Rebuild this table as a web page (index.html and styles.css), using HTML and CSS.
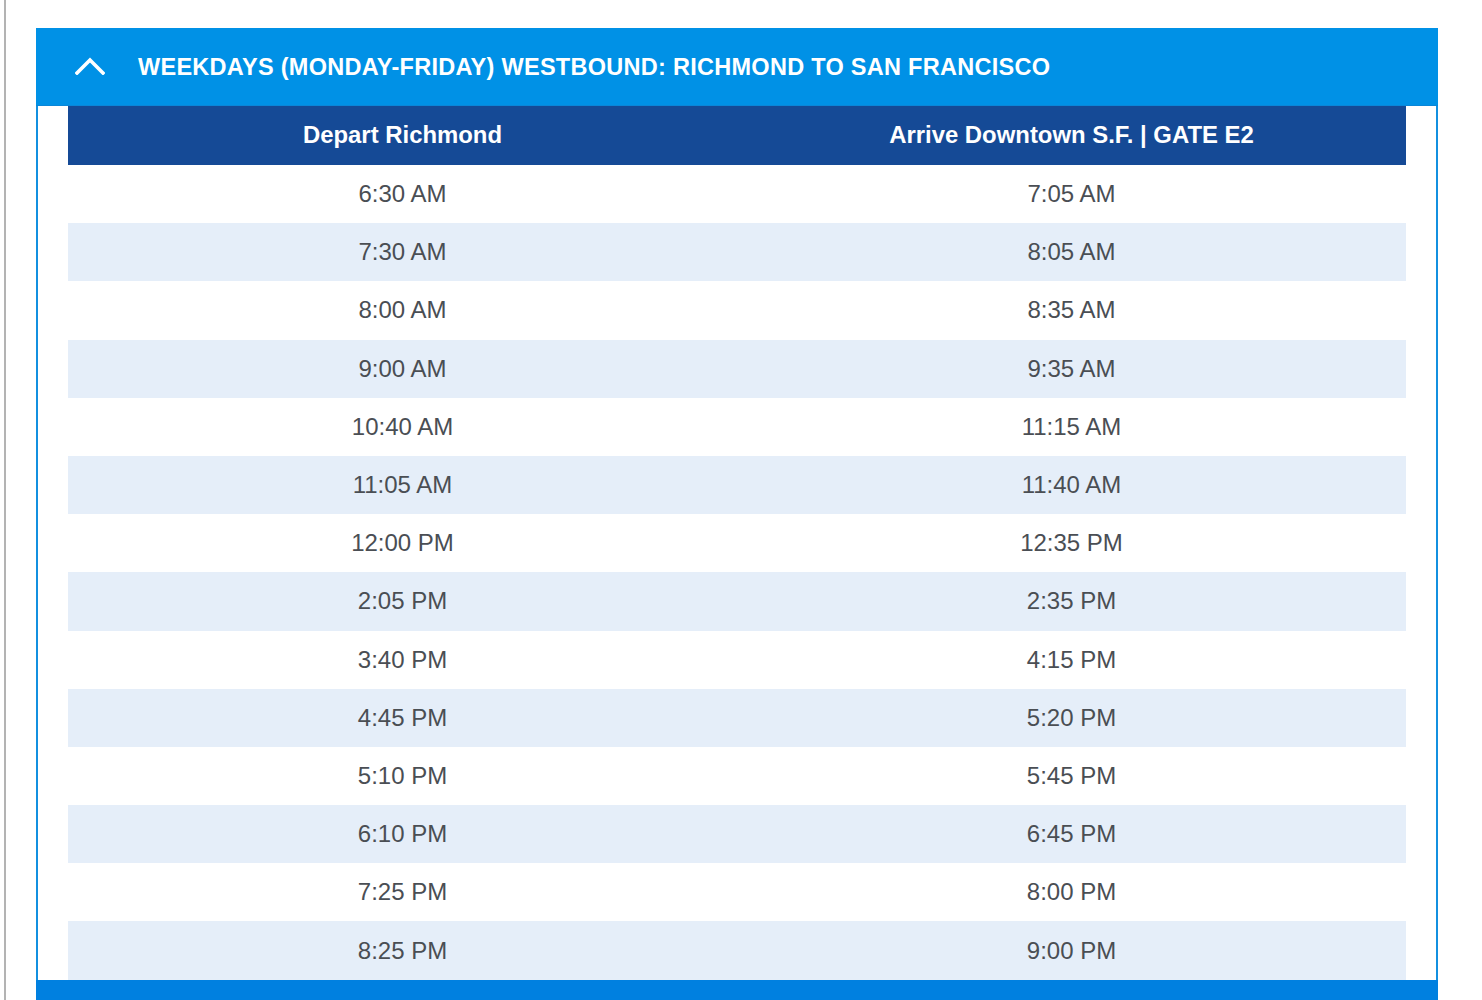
FILE: index.html
```html
<!DOCTYPE html>
<html lang="en">
<head>
<meta charset="utf-8">
<title>Richmond Ferry Schedule</title>
<link rel="stylesheet" href="styles.css">
</head>
<body>
<div class="page">
  <section class="panel">
    <div class="panel-head">
      <svg class="chevron" width="30" height="18" viewBox="0 0 30 18" aria-hidden="true">
        <polyline points="2,16 15,3 28,16" fill="none" stroke="#fff" stroke-width="3.6" stroke-linecap="square" stroke-linejoin="miter"/>
      </svg>
      <h2 class="panel-title">WEEKDAYS (MONDAY-FRIDAY) WESTBOUND: RICHMOND TO SAN FRANCISCO</h2>
    </div>
    <div class="panel-body">
      <table class="schedule">
        <thead>
          <tr><th>Depart Richmond</th><th>Arrive Downtown S.F. | GATE E2</th></tr>
        </thead>
        <tbody>
          <tr><td>6:30 AM</td><td>7:05 AM</td></tr>
          <tr><td>7:30 AM</td><td>8:05 AM</td></tr>
          <tr><td>8:00 AM</td><td>8:35 AM</td></tr>
          <tr><td>9:00 AM</td><td>9:35 AM</td></tr>
          <tr><td>10:40 AM</td><td>11:15 AM</td></tr>
          <tr><td>11:05 AM</td><td>11:40 AM</td></tr>
          <tr><td>12:00 PM</td><td>12:35 PM</td></tr>
          <tr><td>2:05 PM</td><td>2:35 PM</td></tr>
          <tr><td>3:40 PM</td><td>4:15 PM</td></tr>
          <tr><td>4:45 PM</td><td>5:20 PM</td></tr>
          <tr><td>5:10 PM</td><td>5:45 PM</td></tr>
          <tr><td>6:10 PM</td><td>6:45 PM</td></tr>
          <tr><td>7:25 PM</td><td>8:00 PM</td></tr>
          <tr><td>8:25 PM</td><td>9:00 PM</td></tr>
        </tbody>
      </table>
    </div>
    <div class="next-bar"></div>
  </section>
</div>
</body>
</html>
```

FILE: styles.css
```css
html, body {
  margin: 0;
  padding: 0;
  background: #fff;
}

body {
  font-family: "Liberation Sans", Arial, Helvetica, sans-serif;
  overflow: hidden;
}

.page {
  margin-left: 4px;
  border-left: 2px solid #b3b3b3;
  min-height: 1000px;
  padding-top: 28px;
  padding-left: 30px;
  width: 1402px;
}

.panel {
  width: 1402px;
}

.panel-head {
  background: #0091e6;
  height: 77px;
  display: flex;
  align-items: center;
  padding-left: 39px;
  border-bottom: 1px solid #0a86d8;
}

.chevron {
  display: block;
  margin-right: 33px;
  margin-top: -2px;
}

.panel-title {
  margin: 1px 0 0;
  color: #fff;
  font-size: 23.5px;
  font-weight: bold;
  letter-spacing: 0.28px;
}

.panel-body {
  border-left: 2px solid #1390e0;
  border-right: 2px solid #1390e0;
  padding: 0 30px;
  background: #fff;
}

.schedule {
  width: 100%;
  border-collapse: collapse;
  table-layout: fixed;
}

.schedule th {
  background: #154a96;
  color: #fff;
  font-size: 23.9px;
  font-weight: bold;
  height: 57px;
  padding: 0 0 2px;
  text-align: center;
}

.schedule td {
  height: 58.2px;
  padding: 0;
  text-align: center;
  font-size: 24px;
  color: #4a4e54;
}

.schedule tbody tr:nth-child(even) td {
  background: #e5eef9;
}

.next-bar {
  background: #0080e0;
  height: 40px;
}
```
